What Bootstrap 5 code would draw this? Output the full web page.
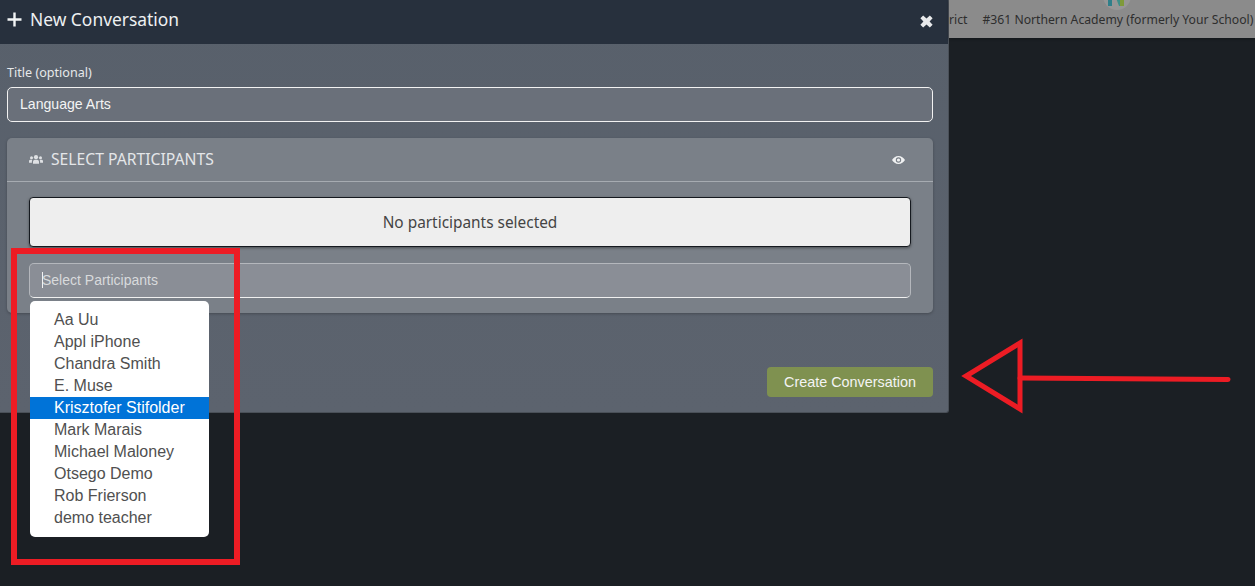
<!DOCTYPE html>
<html lang="en">
<head>
  <meta charset="UTF-8" />
  <meta name="viewport" content="width=device-width, initial-scale=1">
  <title>New Conversation</title>
  <link href="https://cdn.jsdelivr.net/npm/bootstrap@5.3.0/dist/css/bootstrap.min.css" rel="stylesheet"/>
  <style>
    html, body {
      height: 100%;
      overflow: hidden;
    }
    body {
      background-color: #1b1f24;
      font-family: "Noto Sans", sans-serif;
    }
    .stage {
      position: relative;
      width: 1255px;
      height: 586px;
      overflow: hidden;
    }
    .dialog-box {
      width: 949px;
      height: 413px;
      flex: none;
      background: linear-gradient(#58606b, #5c636e);
      border-right: 1px solid #4a5058;
      border-bottom: 1px solid #4a5058;
      border-bottom-right-radius: 3px;
    }
    .dialog-head {
      height: 44px;
      background-color: #27303d;
      color: #eef0f2;
      font-size: 17.4px;
      padding: 0 15px 5px 7px;
    }
    .dialog-form {
      padding: 20px 15px 0 7px;
    }
    .title-label {
      display: block;
      color: #e6e8ea;
      font-size: 12.6px;
      line-height: 18px;
      margin-bottom: 5px;
    }
    .title-input {
      height: 35px;
      background-color: #6a707a;
      border: 1px solid #f2f2f2;
      border-radius: 5px;
      color: #f4f4f4;
      font-family: "Liberation Sans", sans-serif;
      font-size: 14.1px;
      padding: 0 12px 1px;
      box-shadow: none;
    }
    .people-card {
      margin-top: 16px;
      height: 175px;
      background-color: #7a8088;
      border: 0;
      border-radius: 5px;
      box-shadow: 0 1px 3px rgba(0, 0, 0, .25);
    }
    .people-head {
      height: 44px;
      padding: 0 28px 0 22px;
      background: transparent;
      border-bottom: 1px solid #a6abb1;
      border-radius: 0;
      color: #e4e6e8;
      font-size: 15.7px;
    }
    .people-body {
      padding: 15px 22px;
    }
    .none-box {
      height: 50px;
      padding-top: 1px;
      background-color: #eeeeee;
      border: 1px solid #15191f;
      border-radius: 4px;
      color: #444;
      font-size: 15.4px;
      box-shadow: 0 1px 3px rgba(0, 0, 0, .4);
    }
    .people-field {
      position: relative;
      margin-top: 16px;
    }
    .people-input {
      height: 35px;
      background-color: #8a8e96;
      border: 1px solid #b4b7bc;
      border-bottom-color: #f0f0f0;
      border-radius: 5px;
      font-family: "Liberation Sans", sans-serif;
      font-size: 14px;
      padding: 0 12px 2px;
      color: #d8dadc;
    }
    .people-input::placeholder {
      color: #d8dadc;
      opacity: 1;
    }
    .caret-mark {
      position: absolute;
      left: 13px;
      top: 9px;
      width: 1px;
      height: 16px;
      background-color: #f2f2f2;
    }
    .create-btn {
      width: 166px;
      height: 30px;
      padding: 1px 0 0;
      background-color: #7f9150;
      border: 0;
      border-radius: 4px;
      color: #f4f4f4;
      font-family: "Liberation Sans", sans-serif;
      font-size: 14.4px;
    }
    .create-row {
      padding-top: 54px;
    }
    .top-strip {
      flex: 1;
      height: 38px;
      background-color: #8b8b8b;
      color: #2e2e2e;
      font-size: 12.2px;
      padding: 3px 2px 0 0;
      position: relative;
      white-space: nowrap;
      box-shadow: 0 1px 3px rgba(0, 0, 0, .3);
    }
    .strip-logo {
      position: absolute;
      left: 154px;
      top: -15px;
      width: 28px;
      height: 25px;
    }
    .strip-cut {
      margin-right: 15px;
    }
    .people-menu {
      position: absolute;
      left: 30px;
      top: 301px;
      width: 179px;
      height: 236px;
      padding: 8px 0 0;
      margin: 0;
      list-style: none;
      background-color: #fff;
      border-radius: 5px;
      font-family: "Liberation Sans", sans-serif;
      font-size: 16px;
      line-height: 22px;
      color: #505050;
    }
    .people-menu li {
      height: 22px;
      padding-left: 24px;
    }
    .people-menu li.picked {
      background-color: #0073d8;
      color: #fff;
    }
    .red-mark {
      position: absolute;
      left: 0;
      top: 0;
      pointer-events: none;
    }
  </style>
</head>
<body>
  <div class="stage d-flex align-items-start">
    <div class="dialog-box d-flex flex-column">
      <div class="dialog-head d-flex align-items-center justify-content-between">
        <div class="d-flex align-items-center gap-2">
          <svg width="15" height="15" viewBox="0 0 15 15"><path d="M6.3 0.5h2.4v5.8h5.8v2.400H8.700v5.800H6.300V8.700H0.500V6.300h5.800z" fill="#f2f4f5"/></svg>
          <span>New Conversation</span>
        </div>
        <svg class="mt-1" width="13" height="13" viewBox="0 0 14 14"><path d="M3.400 0.600 7 3.900 10.600 0.600 13.600 3.400 10.300 7 13.600 10.600 10.600 13.400 7 10.100 3.400 13.400 0.400 10.600 3.700 7 0.400 3.400z" fill="#e8e9eb"/></svg>
      </div>
      <form class="dialog-form">
        <label class="title-label" for="titleField">Title (optional)</label>
        <input class="form-control title-input" id="titleField" type="text" value="Language Arts" />
        <div class="card people-card">
          <div class="card-header people-head d-flex align-items-center justify-content-between">
            <div class="d-flex align-items-center gap-2">
              <svg width="14" height="9" viewBox="0 0 14 9"><g fill="#dfe1e4"><circle cx="7" cy="2.200" r="2.100"/><path d="M4 8.800V6.600C4 5.200 5.100 4.700 7 4.700s3 .5 3 1.900v2.200z"/><circle cx="2.500" cy="2.800" r="1.500"/><path d="M0 7.800V6.200c0-1 .8-1.400 2.300-1.400.4 0 .7 0 1 .1-.3.4-.4.9-.4 1.500v1.400z"/><circle cx="11.500" cy="2.800" r="1.500"/><path d="M14 7.800V6.200c0-1-.8-1.400-2.300-1.400-.4 0-.7 0-1 .1.3.4.4.9.4 1.500v1.400z"/></g></svg>
              <span>SELECT PARTICIPANTS</span>
            </div>
            <svg width="13" height="8" viewBox="0 0 13 8"><path fill-rule="evenodd" d="M6.500 0C9.400 0 11.700 1.700 13 4 11.700 6.300 9.400 8 6.500 8S1.300 6.300 0 4C1.300 1.700 3.600 0 6.500 0zm0 1.300a2.700 2.700 0 1 0 0 5.400 2.700 2.700 0 0 0 0-5.400zm0 1.100a1.600 1.600 0 1 1 0 3.200 1.600 1.600 0 0 1 0-3.200z" fill="#f0f1f2"/></svg>
          </div>
          <div class="card-body people-body">
            <div class="none-box d-flex align-items-center justify-content-center">No participants selected</div>
            <div class="people-field">
              <input class="form-control people-input" type="text" placeholder="Select Participants" />
              <span class="caret-mark"></span>
            </div>
          </div>
        </div>
        <div class="create-row d-flex justify-content-end">
          <button type="button" class="btn create-btn">Create Conversation</button>
        </div>
      </form>
    </div>
    <div class="top-strip d-flex align-items-center justify-content-end">
      <svg class="strip-logo" viewBox="0 0 28 25"><circle cx="14" cy="11" r="14" fill="#979797"/><path d="M5 2h4v19H5z" fill="#2f7f8a"/><path d="M9 2l7 19h4V2h-4v9L12 2z" fill="#3f8f8a"/><path d="M17 8h4v13h-4z" fill="#7f9a3a"/></svg>
      <span class="strip-cut">rict</span>
      <span>#361 Northern Academy (formerly Your School)</span>
    </div>
    <ul class="people-menu">
      <li>Aa Uu</li>
      <li>Appl iPhone</li>
      <li>Chandra Smith</li>
      <li>E. Muse</li>
      <li class="picked">Krisztofer Stifolder</li>
      <li>Mark Marais</li>
      <li>Michael Maloney</li>
      <li>Otsego Demo</li>
      <li>Rob Frierson</li>
      <li>demo teacher</li>
    </ul>
    <svg class="red-mark" width="1255" height="586" viewBox="0 0 1255 586">
      <rect x="14" y="251" width="223" height="311" fill="none" stroke="#ed1c24" stroke-width="6"/>
      <path d="M1020 343v66l-54-33z" fill="none" stroke="#ed1c24" stroke-width="5"/>
      <path d="M1020 378l208 1.500" fill="none" stroke="#ed1c24" stroke-width="5" stroke-linecap="round"/>
    </svg>
  </div>
  <script src="https://cdn.jsdelivr.net/npm/bootstrap@5.3.0/dist/js/bootstrap.bundle.min.js"></script>
</body>
</html>
